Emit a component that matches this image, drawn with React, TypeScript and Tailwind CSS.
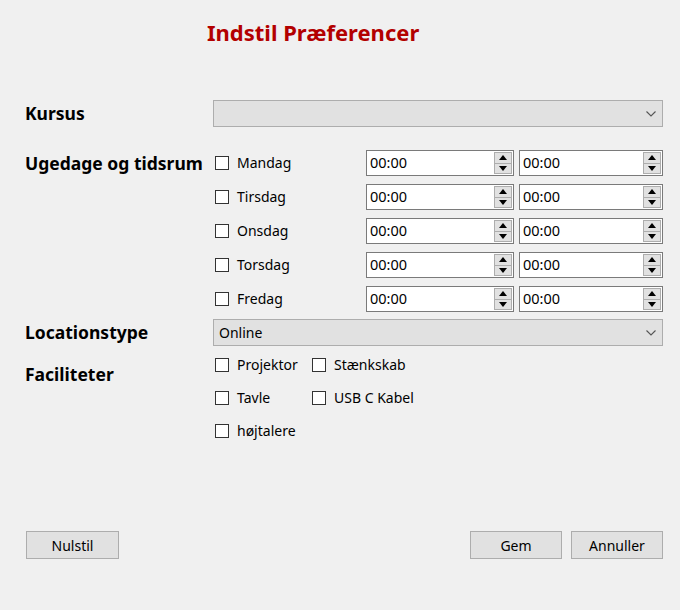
import React from "react";

const font = { fontFamily: '"Noto Sans", "Open Sans", sans-serif' };

function Box() {
  return <span className="inline-block w-[14px] h-[14px] border border-[#333333] bg-white shrink-0" />;
}

function Check({ label }: { label: string }) {
  return (
    <div className="flex items-center gap-[8px] h-[20px]">
      <Box />
      <span className="text-[14px] text-[#000] leading-none">{label}</span>
    </div>
  );
}

function Spin() {
  return (
    <div className="flex items-stretch h-[26px] w-full border border-[#7a7a7a] bg-white">
      <div className="flex-1 flex items-center pl-[3px] text-[14.5px] text-black">00:00</div>
      <div className="flex flex-col w-[18px] my-[1px] mr-[1px] bg-[#f0f0f0]">
        <div className="flex-1 flex items-center justify-center border border-[#adadad] bg-[#e1e1e1]">
          <svg width="8" height="5" viewBox="0 0 8 5"><path d="M0 5 L4 0 L8 5 Z" fill="#000" /></svg>
        </div>
        <div className="flex-1 flex items-center justify-center border border-t-0 border-[#adadad] bg-[#e1e1e1]">
          <svg width="8" height="5" viewBox="0 0 8 5"><path d="M0 0 L4 5 L8 0 Z" fill="#000" /></svg>
        </div>
      </div>
    </div>
  );
}

function Combo({ value }: { value?: string }) {
  return (
    <div className="flex items-center h-[27px] border border-[#adadad] bg-[#e1e1e1] pl-[5px] pr-[6px]">
      <span className="flex-1 text-[14px] text-black">{value ?? ""}</span>
      <svg width="10" height="6" viewBox="0 0 10 6"><path d="M0.5 0.5 L5 5 L9.5 0.5" fill="none" stroke="#555" strokeWidth="1.1" /></svg>
    </div>
  );
}

function Btn({ label, w }: { label: string; w: string }) {
  return (
    <div className={`${w} h-[28px] flex items-center justify-center border border-[#adadad] bg-[#e1e1e1] text-[14px] text-black`}>
      {label}
    </div>
  );
}

export default function App() {
  const days = ["Mandag", "Tirsdag", "Onsdag", "Torsdag", "Fredag"];
  return (
    <div className="w-[680px] h-[610px] bg-[#f0f0f0] flex flex-col" style={font}>
      <div className="h-[100px] pt-[16px] pl-[207px]">
        <span className="text-[22px] font-bold text-[#b30000] leading-[32px]">Indstil Præferencer</span>
      </div>
      <div className="pl-[25px] pr-[17px] grid grid-cols-[188px_1fr] items-start">
        <div className="h-[27px] flex items-center text-[17.5px] font-bold text-black">Kursus</div>
        <Combo />

        <div className="mt-[23px] h-[26px] flex items-center text-[17.5px] font-bold text-black whitespace-nowrap">Ugedage og tidsrum</div>
        <div className="mt-[23px] flex flex-col gap-[8px]">
          {days.map((d) => (
            <div key={d} className="grid grid-cols-[153px_148px_1fr] items-center h-[26px]">
              <div className="pl-[2px]"><Check label={d} /></div>
              <Spin />
              <div className="pl-[5px]"><Spin /></div>
            </div>
          ))}
        </div>

        <div className="mt-[7px] h-[27px] flex items-center text-[17.5px] font-bold text-black">Locationstype</div>
        <div className="mt-[7px]"><Combo value="Online" /></div>

        <div className="mt-[8px] h-[40px] flex items-center text-[17.5px] font-bold text-black">Faciliteter</div>
        <div className="mt-[9px] pl-[2px] grid grid-cols-[97px_1fr] gap-y-[13px]">
          <Check label="Projektor" />
          <Check label="Stænkskab" />
          <Check label="Tavle" />
          <Check label="USB C Kabel" />
          <Check label="højtalere" />
        </div>
      </div>
      <div className="flex-1" />
      <div className="flex items-center pl-[26px] pr-[17px] pb-[51px] gap-[9px]">
        <Btn label="Nulstil" w="w-[93px]" />
        <div className="flex-1" />
        <Btn label="Gem" w="w-[92px]" />
        <Btn label="Annuller" w="w-[92px]" />
      </div>
    </div>
  );
}
